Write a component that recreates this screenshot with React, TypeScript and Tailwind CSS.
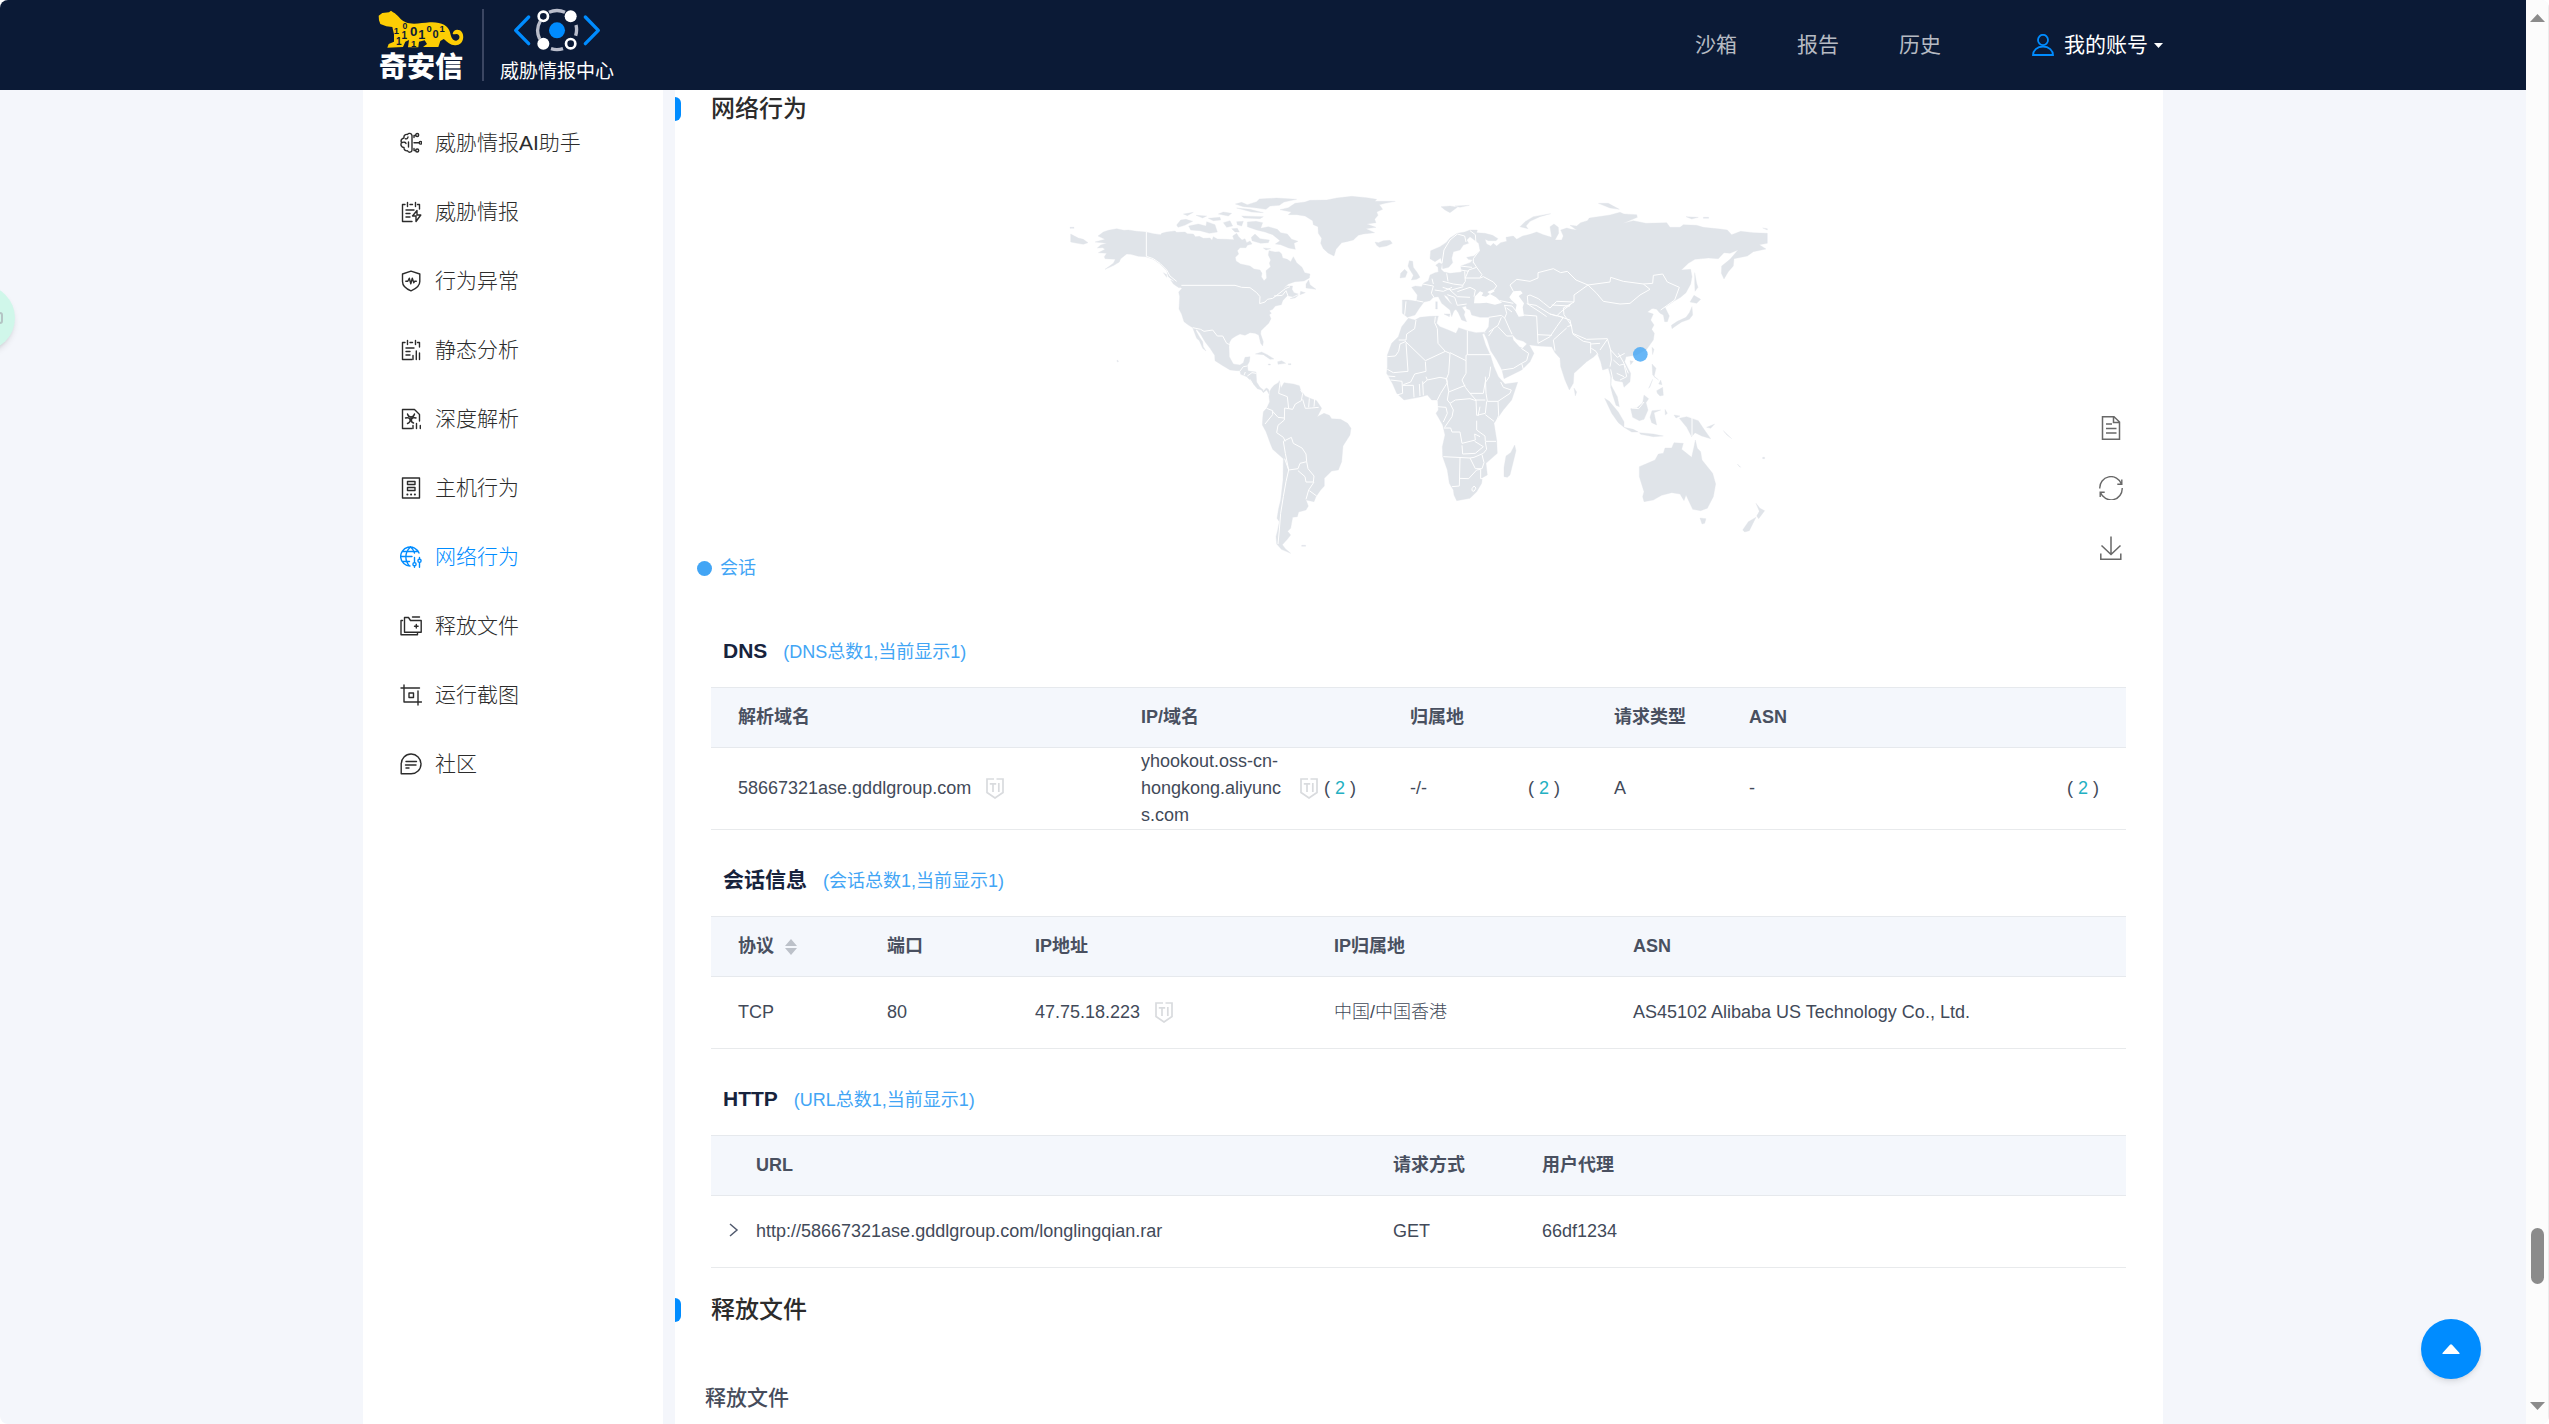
import React from "react";

type IconProps = { children: React.ReactNode };

function MenuIcon({ children }: IconProps) {
  return (
    <svg
      className="size-[22px] shrink-0"
      viewBox="0 0 22 22"
      fill="none"
      stroke="currentColor"
      strokeWidth="1.4"
      strokeLinecap="round"
      strokeLinejoin="round"
      aria-hidden="true"
    >
      {children}
    </svg>
  );
}

const notebook = (
  <>
    <path d="M5 3.500H2.500v17H12M10 3.500h2.500M17.500 3.500h2v4.500M7.500 1.500v4M15.500 1.500v4M6 9h8M6 12.500h4M6 16h4" />
  </>
);

const menu: { label: string; active?: boolean; icon: React.ReactNode }[] = [
  {
    label: "威胁情报AI助手",
    icon: (
      <>
        <path d="M12 3.500C11.500 1 8.500.800 7.500 2.500 5 2 3.500 4 4 6 1.500 6.500.500 8.500 1.500 10.500.200 13 1.500 15.500 4 15.500 3.800 18 5.500 19 7.500 18.800 8.500 21 12 20.500 12 18zM8 5c-.2 1.500-1.500 2-2.500 1.800M2 10.500c2-.8 3.500-.3 4 1M8.500 10v5" />
        <path d="M14 5.500V3.500h1.500M14 10.800h5M14 16.500v2h1.500" />
        <circle cx="17.200" cy="3" r="1.500" />
        <circle cx="20.500" cy="10.800" r="1.300" />
        <circle cx="17.200" cy="18.500" r="1.500" />
      </>
    ),
  },
  {
    label: "威胁情报",
    icon: (
      <>
        {notebook}
        <path d="M17 9.500 12.500 15H16v5.500L20.800 14H17z" />
      </>
    ),
  },
  {
    label: "行为异常",
    icon: (
      <>
        <path d="M11 1.200 19.800 4v7.500c0 4.500-4.200 7.500-8.800 9.300C6.400 19 2.500 16 2.500 11.500V4z" />
        <path d="M5.800 11.200h2l1.500-3 1.500 5.600 1.500-5.600 1.500 4.500 1-1.500h1.500" />
      </>
    ),
  },
  {
    label: "静态分析",
    icon: (
      <>
        {notebook}
        <path d="M13 16.500v4M16.300 12v8.500M19.500 14v6.500" />
      </>
    ),
  },
  {
    label: "深度解析",
    icon: (
      <>
        <path d="M12 20.500H2.500V1.500h12L19.500 6.500V13" />
        <path d="M13 17.500v3M16.500 15.500v5M20.300 17.500v3" />
        <path d="M7.500 6c.5 2 1.500 3 3.500 3s3-1 3.500-3M5.500 10c2-.8 4 0 4.500 1.500s-.5 3.500-2.500 4M16 10c-2-.8-4 0-4.500 1.500s.5 3 2 3.500M11 9v4" />
      </>
    ),
  },
  {
    label: "主机行为",
    icon: (
      <>
        <rect x="2.500" y="1" width="17" height="20" />
        <rect x="7.500" y="4.500" width="7.500" height="3" />
        <rect x="7.500" y="10.500" width="7.500" height="3" />
        <path d="M7.300 17.500h.2M11 17.500h.2M14.800 17.500h.2" strokeWidth="1.900" />
      </>
    ),
  },
  {
    label: "网络行为",
    active: true,
    icon: (
      <>
        <path d="M19 7A9.500 9.500 0 1 0 10 20M10.500 1C4.500 6.500 4.500 14.500 9.500 20M10.500 1c2 1.500 3.300 3.500 4 6M2.500 5.500h15.500M1 10.500h11M2.500 15.500h7" />
        <path d="M14.500 11.500v5M14.500 20v1.300M19.500 11.500V13M19.500 16.500v4.800" />
        <circle cx="14.500" cy="18.200" r="1.600" />
        <circle cx="19.500" cy="14.800" r="1.600" />
      </>
    ),
  },
  {
    label: "释放文件",
    icon: (
      <>
        <path d="M4.500 2.500h4l2 3h10.700v11.700H4.500zM12.500 2h7M2.500 5.500H1v14.300h16.500v-2" />
        <path d="M16.300 9.500v3.600M14.500 11.300h3.600" />
      </>
    ),
  },
  {
    label: "运行截图",
    icon: (
      <>
        <path d="M1 4h18.500M4 1v17M4 18h17.500M18 7v14" />
        <rect x="9" y="9" width="4.500" height="4.500" />
      </>
    ),
  },
  {
    label: "社区",
    icon: (
      <>
        <path d="M1.200 20.800V11A9.900 9.900 0 1 1 11 20.800zM6 8.500h10.500M5.500 12h10.500M6 15h3" />
      </>
    ),
  },
];

function TigerLogo() {
  return (
    <svg className="h-[38px] w-[86px]" viewBox="115 25 258 114" aria-hidden="true">
      <path
        fill="#fdcd04"
        d="M117 42 128 34 148 32 154 27 160 32C176 40 182 56 198 62 218 70 245 64 270 62 302 60 326 70 331 92 335 110 340 118 350 117 363 114 362 97 350 97 345 97 342 100 339 96 341 84 352 82 361 86 376 95 374 126 352 130 335 134 325 122 312 112L302 118 296 136H250L262 127 255 116 238 120 236 137H205L208 115 197 120 190 136 143 138 147 127 163 120 163 98 158 76 140 74 122 67 118 56z"
      />
      <g fill="#0b1a36" fontFamily="Liberation Sans" fontWeight="700" textAnchor="middle">
        <text x="170" y="98" fontSize="28">1</text>
        <text x="196" y="82" fontSize="26">0</text>
        <text x="194" y="112" fontSize="30">1</text>
        <text x="177" y="130" fontSize="30">1</text>
        <text x="222" y="103" fontSize="40">0</text>
        <text x="222" y="137" fontSize="28">1</text>
        <text x="246" y="111" fontSize="38">1</text>
        <text x="268" y="92" fontSize="28">0</text>
        <text x="288" y="109" fontSize="33">0</text>
        <text x="307" y="92" fontSize="28">1</text>
      </g>
    </svg>
  );
}

function CenterLogo() {
  return (
    <svg className="h-[45px] w-[88px]" viewBox="520 25 264 135" fill="none" aria-hidden="true">
      <g stroke="#008cff" strokeWidth="10" strokeLinecap="round" strokeLinejoin="round">
        <path d="M567 52 528 92 567 132M737 52 776 92 737 132" />
      </g>
      <path
        stroke="#b9bdcb"
        strokeWidth="10"
        d="M602 64A57 57 0 0 0 600 118M628 38A58 58 0 0 1 676 38M709 76A58 58 0 0 1 708 108M634 147A58 58 0 0 0 670 147"
      />
      <circle cx="652" cy="92" r="24" fill="#008cff" />
      <g stroke="#fff" strokeWidth="8">
        <circle cx="611" cy="50" r="14" fill="#0b1a36" />
        <circle cx="693" cy="132" r="14" fill="#0b1a36" />
      </g>
      <circle cx="693" cy="50" r="18" fill="#fff" />
      <circle cx="611" cy="132" r="18" fill="#fff" />
    </svg>
  );
}

function Header() {
  return (
    <header className="h-[90px] shrink-0 bg-[#0b1a36]">
      <div className="mx-auto flex h-full max-w-[1800px] items-center pl-[15px]">
        <a href="#home" className="flex flex-col items-center gap-1 pt-1" aria-label="奇安信">
          <TigerLogo />
          <span className="text-[28px] leading-8 font-black text-white">奇安信</span>
        </a>
        <span className="mr-4 ml-[18px] h-[72px] w-[2px] bg-[#3b4662]" />
        <a href="#ti" className="flex flex-col items-center gap-1 pt-1">
          <CenterLogo />
          <span className="text-[19px] leading-[30px] text-white">威胁情报中心</span>
        </a>
        <nav className="ml-auto flex items-center gap-[60px] text-[21px] text-[#b6bac3]">
          <a href="#sandbox">沙箱</a>
          <a href="#report">报告</a>
          <a href="#history">历史</a>
        </nav>
        <button type="button" className="ml-[91px] flex items-center text-[21px] text-white">
          <svg className="mr-[10px] size-[22px]" viewBox="0 0 22 22" fill="none" stroke="#008cff" strokeWidth="1.800" aria-hidden="true">
            <ellipse cx="11" cy="6" rx="5" ry="5.200" />
            <path d="M1 21c0-4.500 4-8.500 10-8.500S21 16.500 21 21z" />
          </svg>
          我的账号
          <svg className="ml-[6px] h-[5px] w-[9px]" viewBox="0 0 9 5" fill="#fff" aria-hidden="true">
            <path d="M0 0h9L4.500 5z" />
          </svg>
        </button>
      </div>
    </header>
  );
}

function Sidebar() {
  return (
    <aside className="w-[300px] shrink-0 bg-white pt-[18px]">
      <ul>
        {menu.map((m) => (
          <li key={m.label}>
            <a
              href={"#" + m.label}
              className={
                "flex h-[69px] items-center gap-[13px] pl-[37px] text-[21px] font-light " +
                (m.active ? "text-[#008cff]" : "text-[#2c2c2c]")
              }
            >
              <MenuIcon>{m.icon}</MenuIcon>
              {m.label}
            </a>
          </li>
        ))}
      </ul>
    </aside>
  );
}

const americas =
  "M148 165 160 156 175 151 200 146 222 151 235 150 260 154 287 156 310 161 332 164 335 160 350 156 375 153 380 157 405 156 412 161 430 162 436 170 448 169 460 175 480 174 486 181 490 170 502 177 530 178 552 179 548 168 560 160 566 170 576 180 585 176 590 188 600 183 606 192 592 196 588 203 570 203 562 212 566 222 556 232 558 243 572 252 600 258 612 267 630 270 636 280 634 290 642 302 650 294 648 272 662 260 658 250 662 240 655 225 657 212 675 216 688 215 695 222 698 234 712 238 722 245 730 230 740 248 756 262 764 278 780 282 778 294 762 303 735 305 715 312 700 325 712 318 728 318 726 328 732 338 745 342 728 350 712 347 698 362 694 374 676 378 668 388 658 392 664 400 658 404 663 416 656 430 645 440 633 452 632 462 640 485 638 498 632 490 626 465 615 460 600 458 585 466 570 462 558 468 545 476 538 488 537 500 538 530 550 552 570 555 580 548 585 532 600 530 598 545 592 556 594 572 602 574 618 576 620 606 630 622 640 630 650 624 658 630 657 642 650 630 640 638 634 630 622 626 610 612 600 600 590 590 572 583 570 572 560 572 540 570 515 555 495 542 494 526 480 505 465 485 450 460 440 448 438 452 448 470 458 485 460 500 468 513 458 505 448 482 440 475 435 462 428 443 415 435 402 425 395 403 387 387 389 350 386 336 396 325 380 318 370 302 355 290 350 272 330 252 310 238 287 230 265 229 243 223 230 222 212 236 208 246 192 256 165 268 190 250 196 238 165 236 163 230 170 220 145 218 165 208 158 203 142 204 152 195 170 190 135 186 165 178 144 168z" +
  "M685 608 672 616 665 624 660 632 657 650 659 665 650 685 640 695 638 715 637 735 648 755 660 788 668 808 700 836 699 900 692 960 686 985 681 1015 688 1025 683 1050 678 1070 680 1092 694 1108 722 1120 706 1106 697 1094 712 1078 722 1065 713 1054 722 1045 728 1012 742 1010 746 996 768 990 775 978 768 960 792 965 798 950 812 930 823 918 823 895 845 873 865 870 875 845 879 798 900 765 903 745 893 730 872 718 845 716 838 706 822 700 802 710 815 685 800 662 780 655 765 648 752 630 748 617 730 612 702 608 693 624 688 602z" +
  "M690 89 715 83 735 70 765 66 780 61 830 60 860 54 905 49 950 53 980 58 975 64 1036 64 1005 70 988 74 998 88 980 96 984 106 974 118 978 128 950 132 978 142 948 146 974 158 940 162 925 166 910 180 890 185 875 188 858 208 852 228 834 219 820 206 812 190 815 175 805 160 804 140 790 134 788 122 765 108 740 104 715 104 724 96z" +
  "M975 186 985 188 1000 182 1020 181 1027 190 1010 198 988 202 980 196z" +
  "M556 72 575 67 592 74 620 65 628 57 680 54 740 58 702 66 688 76 660 78 648 88 620 84 602 82 580 80zM560 84 600 88 640 98 605 96zM575 108 640 110 630 116 582 114zM520 96 545 100 535 108 505 102z" +
  "M592 126 618 124 638 128 632 145 655 140 682 148 692 158 712 162 725 178 744 184 732 190 736 208 716 204 692 194 676 192 690 182 668 164 645 156 620 150 592 140z" +
  "M416 138 445 132 468 138 470 125 495 134 502 156 478 160 450 152 422 150zM380 135 392 120 408 118 428 124 404 136 384 142zM520 128 540 122 548 138 530 142zM560 125 580 124 575 138 562 134zM545 146 562 145 568 156 555 156zM604 172 615 162 630 176 658 180 655 188 632 190 606 182zM438 106 470 108 458 114zM400 102 430 97 412 107zM475 115 510 112 512 120 490 122zM640 204 662 206 648 210z" +
  "M768 312 776 300 780 314 798 328 768 324zM720 356 745 346 735 354zM752 334 766 338 750 344z" +
  "M616 522 635 516 652 524 672 537 660 538 640 524zM683 545 695 542 707 550 684 553zM715 551h8v3h-8zM655 552h6v3h-6z" +
  "M62 162 85 174 100 178 114 188 100 193 82 190 62 186zM60 142h12v3h-12zM201 540 206 544 202 546zM340 278 350 284 350 292zM362 300 390 316 388 324 370 312zM755 1096h12v3h-12z";

const americasBorders =
  "M289 156V229L310 236 330 250 350 270 360 288 380 304M394 316H555L575 322 600 323 620 338 630 350 629 371 645 366 652 358 668 355 684 343 706 326 720 320M672 348 697 346 708 332 714 348M428 443 452 448 462 454 488 450 502 468 518 468 530 490 540 494M570 573 580 560 592 558M586 576 582 586M592 588 606 578 618 580M608 612 600 598M640 632 644 626M658 632V624M690 608 686 640 712 650 716 686 704 684 703 720 684 736 680 758 700 772 706 784M650 685 668 692 668 704 645 732M668 694 684 712 702 714M716 686 728 688 736 672 754 662 758 640 752 630M758 658 766 685 785 684 806 682M778 655 776 682M794 656 792 680M700 784 724 772 730 790 756 804 768 822 770 845 750 850 744 866 716 870 706 820zM704 836 716 870 708 905 700 950 692 1000 688 1050 684 1092M770 845 774 866 792 888 790 906 768 906 765 890 744 872M792 906 776 930 768 958M778 932 800 948";

const oldWorld =
  "M97 360 115 360 140 364 142 345 125 322 136 318 155 320 160 310 175 302 180 285 195 278 205 276 204 262 197 256 207 248 216 252 213 268 222 276 240 280 275 276 272 258 300 248 308 240 295 238 290 232 312 228 330 212 326 190 300 170 290 180 296 190 280 195 270 210 250 215 245 235 248 248 236 262 218 266 216 248 212 234 195 245 180 236 182 212 210 200 228 188 240 174 262 160 284 156 300 150 322 150 320 158 345 160 368 166 384 176 378 182 355 182 345 178 350 192 362 198 370 190 380 198 392 188 410 184 408 172 430 168 440 178 458 168 480 163 500 156 520 164 545 172 540 140 552 132 565 142 566 160 555 180 575 180 580 168 572 150 590 144 605 148 620 150 600 136 620 138 632 128 652 122 658 114 720 105 750 97 762 102 800 104 802 112 760 130 790 122 828 130 890 128 900 142 930 142 940 134 980 136 1000 142 1050 147 1072 150 1085 164 1112 154 1150 158 1192 160 1192 190 1168 194 1188 207 1150 215 1132 228 1092 236 1090 258 1075 275 1062 297 1054 280 1055 258 1080 238 1104 210 1080 220 1062 218 1045 236 1015 234 975 238 955 250 934 270 962 268 966 290 962 312 948 338 932 352 914 362 885 382 898 408 892 425 884 425 880 405 870 400 860 388 845 385 857 378 832 396 850 402 842 420 852 435 845 448 853 460 850 480 830 508 800 525 768 530 764 545 782 580 780 605 762 622 758 606 735 602 724 590 723 615 742 650 748 680 738 676 728 645 722 622 722 590 715 565 698 570 692 545 682 520 672 530 650 545 612 580 610 610 598 630 585 600 572 560 570 535 555 518 545 500 505 498 474 494 460 484 440 478 425 462 430 480 448 500 458 505 474 488 492 520 480 545 455 570 402 596 396 570 380 540 362 512 352 480 342 460 356 440 358 412 330 412 305 405 300 390 290 386 288 378 276 382 285 395 282 405 290 425 275 420 265 398 255 384 240 364 232 350 222 344 225 352 240 368 262 385 252 392 245 410 240 390 215 370 205 350 190 352 180 362 162 366 148 385 135 405 112 412 97 400z" +
  "M135 420 115 415 95 440 85 470 65 490 52 525 52 560 50 580 68 612 80 640 102 660 130 655 155 650 172 645 185 660 203 660 205 690 198 700 218 735 225 765 217 800 218 830 232 870 238 910 250 930 252 945 260 962 300 955 320 935 335 910 337 893 352 885 348 850 382 820 380 780 372 730 400 690 425 660 443 607 405 612 385 590 372 560 362 528 347 495 337 463 350 456 318 458 292 452 266 443 258 460 235 450 210 440 200 430 205 408 180 409 150 412z" +
  "M118 242 128 244 130 262 142 278 150 292 140 298 124 300 130 286 120 270 114 258zM92 280 104 268 112 276 106 292 90 294z" +
  "M213 80 240 78 262 82 240 98 225 90zM255 78 298 76 270 82zM450 140 465 125 490 110 542 101 510 110 480 124 468 138 474 146zM685 70 715 70 748 88 720 84zM948 110 985 112 965 117zM1000 112h16v3h-16zM1178 144 1192 146v4z" +
  "M974 278 980 310 984 322 975 334 974 310zM960 366 972 346 992 358 980 370zM966 380 968 405 958 418 935 426 914 440 906 446 904 436 922 424 948 412 958 398z" +
  "M704 655 718 664 745 696 762 725 762 742 745 728 725 700zM762 742 790 748 805 756 785 756zM808 758 850 762 880 768 850 770 812 763zM782 686 800 684 818 668 822 645 836 656 828 668 834 690 822 718 808 722 788 712zM846 692 872 690 852 698 860 735 845 728 840 712zM885 688 892 700 886 705zM912 705 930 708 918 714zM928 715 950 710 985 722 1000 745 1022 776 995 768 975 758 965 770 950 742zM1010 742 1034 732 1022 745zM846 552 858 565 852 590 866 600 848 585zM860 632 878 622 880 646 870 648 862 640zM872 600 876 614 866 612zM836 625 848 598 840 620zM846 502 852 508 848 524zM780 542 790 544 782 554zM612 624 620 636 616 648zM402 890 402 862 408 828 422 818 434 795 438 812 420 885 412 892z" +
  "M808 860 832 850 855 840 865 822 880 820 885 804 905 804 912 788 940 790 935 808 965 832 972 800 976 780 982 805 992 815 996 840 1028 880 1037 912 1030 950 1012 985 992 992 968 988 948 945 942 962 930 942 905 938 875 946 850 960 822 965 818 950 822 935 808 890zM990 1014 1008 1016 1004 1030 996 1032zM1158 970 1170 985 1184 992 1166 1016 1160 1008 1168 994zM1118 1050 1135 1025 1158 1012 1138 1052 1124 1056zM1102 852 1112 862 1108 860zM1178 832h6v4h-6zM1060 752 1085 776 1070 764zM197 365h5v22h-5zM222 402 240 402 238 410z";

const seas =
  "M312 370 314 350 330 334 340 338 335 347 348 350 360 342 378 352 396 368 375 374 350 368 330 370zM352 336 370 328 374 334 360 342zM418 352 430 334 452 332 458 340 446 348 462 370 458 382 462 408 446 410 436 392 440 374 424 360z";

const oldBorders =
  "M108 364 104 404M140 362 160 366M158 312 190 318 184 340 192 352M186 296 190 312M230 280 234 304M194 330 220 334 246 322M218 304 250 312 280 316M218 322 244 330 280 320M284 274 286 304 278 316M240 330 262 350 300 352M262 335 276 330 300 322 316 330 312 350M232 344 254 352 262 376 290 372M284 294 330 294M286 294 296 270 320 262 310 246M270 258 306 262M272 270 296 274M330 294 340 290 370 306 380 318 368 335M320 262 336 284 330 292M216 250 222 210 240 180 262 162 284 168 288 186M300 152 316 164 318 190 328 212 310 236 310 250" +
  "M430 334 420 315 440 298 480 304 504 294 504 278 550 266 572 278 592 274 618 300 654 315 612 345 612 366 560 364 540 384 520 368 505 356 480 345 472 348 474 372M654 315 720 306 722 292 760 304 820 312 840 328 810 345 780 370 750 372 700 364 680 340 654 315M820 312 848 310 850 286 878 282 892 306 928 322 914 360 872 390M612 366 580 384 582 404 604 436 608 460 650 478 712 476 722 510 742 532 764 520M474 372 498 376 540 402 560 408 572 396 604 372M462 405 500 408 504 490 540 470 560 440 580 412 540 402M504 464 545 466M470 370 510 396 530 410M555 512 550 480 590 444M592 440 604 436M608 462 640 484 662 488 662 520M662 492 690 490M664 505 678 514 684 524M712 478 690 510M722 510 724 540 720 560M730 540 748 556 762 552 770 590 750 600M745 520 762 550 775 580M740 580 762 590M728 596 722 568" +
  "M356 412 394 406 404 414 420 450 426 462M404 376 410 400 404 414M402 376 426 378 440 395M390 362 430 370M410 384 426 396M394 412 384 436 356 456M384 440 410 468 426 468M370 448 356 468M396 570 430 565 455 550 470 542 476 520 454 505M455 550 460 568M565 408 600 420 604 440M545 375 600 378M786 684 806 686 822 666M966 714V768" +
  "M86 480 108 480 110 462 134 446 138 420M108 484 90 492 86 514 76 528 52 530M108 488 114 574 70 578 52 568M108 486 166 542 226 514 204 490 202 446 194 428 196 410M166 545 168 574 134 582 122 606 100 614M226 514 240 520 236 580 228 600M240 518 288 542 288 526 292 524 292 452M292 524H362M288 542 288 580 276 600 286 622 300 640 318 660 346 660M62 600 96 604 98 640 80 645M52 588 76 590M98 616 130 616 132 652M148 612 150 648M158 604 160 646M168 590 172 600 210 592 230 596 232 608 212 640 202 660M230 600 236 634 232 660 240 670 256 660 300 656 318 662M236 636 286 616M172 600 158 612M202 680 228 682 232 700 220 726M240 670 250 690 246 710 224 742M222 744 242 744 246 756 270 756 276 790 316 780 314 762 330 770M346 590 348 640 352 664 384 664 420 640 424 630 400 622 392 606M384 664 386 706 378 728M346 604 340 640 300 640M362 560 358 590 346 608M350 664 346 700 320 706 318 660M320 722 320 750 345 768 346 784 378 784M346 704 372 724M324 708 330 680M314 784 340 800 316 820 278 822 276 796M220 830 300 834 312 832 340 820 350 808 346 786M270 834 268 918 246 920M268 895 296 896 320 870 332 868 332 896 340 896M300 834 316 866 336 866 342 848 336 824M306 926 312 918 318 924 312 934 306 932z";

function WorldMap() {
  return (
    <svg className="h-auto w-full self-start" viewBox="0 0 2220 1170" role="img" aria-label="会话分布地图">
      <g fill="#e0e4e9" stroke="#e0e4e9" strokeWidth="1" strokeLinejoin="round">
        <path d={americas} />
        <path d={oldWorld} transform="translate(960 0)" />
      </g>
      <path d={seas} fill="#fff" transform="translate(960 0)" />
      <g fill="none" stroke="#fff" strokeWidth="3" strokeLinejoin="round">
        <path d={americasBorders} />
        <path d={oldBorders} transform="translate(960 0)" />
      </g>
      <circle cx="1771" cy="523" r="22" fill="#42a5f5" fillOpacity="0.800" />
    </svg>
  );
}

function TiBadge() {
  return (
    <svg className="h-[21px] w-[18px] shrink-0" viewBox="0 0 18 21" fill="none" stroke="#d9dbde" strokeWidth="1.700" aria-label="TI">
      <path d="M8 1H1v13.500L9 20l8-5.500V1h-6.500" />
      <path d="M3.800 5.800h6.400M7 5.800V14M12.800 5v9" />
    </svg>
  );
}

function Count({ n }: { n: number }) {
  return (
    <button type="button" className="shrink-0 whitespace-pre">
      ( <span className="text-[#23b0c2]">{n}</span> )
    </button>
  );
}

function TableTitle({ title, note }: { title: string; note: string }) {
  return (
    <div className="flex h-[86px] items-center gap-4 pt-[14px] pl-3">
      <h3 className="text-[21px] leading-8 font-bold text-[#17233d]">{title}</h3>
      <span className="pt-0.5 text-[18px] leading-8 text-[#42a5f5]">{note}</span>
    </div>
  );
}

function SectionTitle({ children }: { children: string }) {
  return (
    <div className="flex h-[38px] items-center">
      <span className="h-6 w-[6px] rounded-r-md bg-[#008cff]" />
      <h2 className="ml-[30px] text-[24px] leading-8 font-medium text-[#2c2c2c]">{children}</h2>
    </div>
  );
}

const table = "w-full table-fixed border-t border-[#e6e9ed] text-left text-[18px] leading-[27px] text-[#424a59]";
const headRow = "h-[60px] border-b border-[#e6e9ed] bg-[#f4f7fc] text-[#495060]";
const bodyRow = "h-[72px] border-b border-[#e8eaec]";
const cell = "pl-[27px]";

function DnsTable() {
  return (
    <table className={table}>
      <colgroup>
        <col className="w-[403px]" />
        <col className="w-[269px]" />
        <col className="w-[204px]" />
        <col className="w-[135px]" />
        <col />
      </colgroup>
      <thead>
        <tr className={headRow}>
          {["解析域名", "IP/域名", "归属地", "请求类型", "ASN"].map((h) => (
            <th key={h} scope="col" className={cell}>{h}</th>
          ))}
        </tr>
      </thead>
      <tbody>
        <tr className="border-b border-[#e8eaec]">
          <td className={cell}>
            <div className="flex items-center gap-[15px]">
              58667321ase.gddlgroup.com
              <TiBadge />
            </div>
          </td>
          <td className="px-[27px]">
            <div className="flex items-center">
              <span className="w-[144px] break-words">yhookout.oss-cn-hongkong.aliyuncs.com</span>
              <span className="ml-auto flex items-center gap-[6px]">
                <TiBadge />
                <Count n={2} />
              </span>
            </div>
          </td>
          <td className="px-[27px]">
            <div className="flex items-center justify-between">-/-<Count n={2} /></div>
          </td>
          <td className={cell}>A</td>
          <td className="px-[27px]">
            <div className="flex items-center justify-between">-<Count n={2} /></div>
          </td>
        </tr>
      </tbody>
    </table>
  );
}

function SessionTable() {
  return (
    <table className={table}>
      <colgroup>
        <col className="w-[149px]" />
        <col className="w-[148px]" />
        <col className="w-[299px]" />
        <col className="w-[299px]" />
        <col />
      </colgroup>
      <thead>
        <tr className={headRow}>
          <th scope="col" className={cell}>
            <button type="button" className="flex items-center gap-[11px]">
              协议
              <svg className="h-4 w-3" viewBox="0 0 12 16" fill="#bcc1c9" aria-hidden="true">
                <path d="M6 0 12 7H0zM6 16 0 9h12z" />
              </svg>
            </button>
          </th>
          {["端口", "IP地址", "IP归属地", "ASN"].map((h) => (
            <th key={h} scope="col" className={cell}>{h}</th>
          ))}
        </tr>
      </thead>
      <tbody>
        <tr className={bodyRow}>
          <td className={cell}>TCP</td>
          <td className={cell}>80</td>
          <td className={cell}>
            <div className="flex items-center gap-[15px]">
              47.75.18.223
              <TiBadge />
            </div>
          </td>
          <td className="pl-[27px] font-light">中国/中国香港</td>
          <td className={cell}>AS45102 Alibaba US Technology Co., Ltd.</td>
        </tr>
      </tbody>
    </table>
  );
}

function HttpTable() {
  return (
    <table className={table}>
      <colgroup>
        <col className="w-[45px]" />
        <col className="w-[610px]" />
        <col className="w-[149px]" />
        <col />
      </colgroup>
      <thead>
        <tr className={headRow}>
          <td />
          <th scope="col">URL</th>
          <th scope="col" className={cell}>请求方式</th>
          <th scope="col" className={cell}>用户代理</th>
        </tr>
      </thead>
      <tbody>
        <tr className={bodyRow}>
          <td className="pb-1 pl-4">
            <button type="button" aria-label="展开" className="flex items-center">
              <svg className="h-[14px] w-3" viewBox="0 0 12 14" fill="none" stroke="#515a6e" strokeWidth="1.500" aria-hidden="true">
                <path d="M3 1 10 7 3 13" />
              </svg>
            </button>
          </td>
          <td>http://58667321ase.gddlgroup.com/longlingqian.rar</td>
          <td className={cell}>GET</td>
          <td className={cell}>66df1234</td>
        </tr>
      </tbody>
    </table>
  );
}

function MapTools() {
  const tool = "flex size-6 items-center justify-center";
  const draw = "size-6";
  return (
    <div className="flex flex-col gap-9 self-end justify-self-end pr-10 pb-5 text-[#686868]">
      <button type="button" aria-label="数据视图" className={tool}>
        <svg className={draw} viewBox="0 0 24 24" fill="none" stroke="currentColor" strokeWidth="1.500">
          <path d="M3.500.800H15L20.500 6v17.200h-17zM14.500.800V6.500h6M7 8h6M7 12.500h10.500M7 17h10.500" />
        </svg>
      </button>
      <button type="button" aria-label="还原" className={tool}>
        <svg className={draw} viewBox="0 0 24 24" fill="none" stroke="currentColor" strokeWidth="1.400">
          <path d="M.800 12.500A11.200 11.200 0 0 1 22.500 8M23.200 12A11.200 11.200 0 0 1 1.500 16.500M22.800 3.500V8.300h-4.500M1.200 21v-4.800h4.500" />
        </svg>
      </button>
      <button type="button" aria-label="保存为图片" className={tool}>
        <svg className={draw} viewBox="0 0 24 24" fill="none" stroke="currentColor" strokeWidth="1.500">
          <path d="M12 .500V18M2.500 9.500 12 18.500 21.500 9.500M1.800 17.500v5.700h20v-5.700" />
        </svg>
      </button>
    </div>
  );
}

function Scrollbar() {
  return (
    <div className="flex w-[23px] shrink-0 flex-col items-center border-r border-[#ececec] bg-[#fcfcfc] pt-[14px] pb-[14px]" aria-hidden="true">
      <svg className="h-2 w-[15px]" viewBox="0 0 15 8" fill="#8b8b8b"><path d="M7.500 0 15 8H0z" /></svg>
      <div className="flex-1" />
      <div className="h-14 w-[13px] rounded-full bg-[#8b8b8b]" />
      <div className="h-[118px]" />
      <svg className="h-2 w-[15px]" viewBox="0 0 15 8" fill="#8b8b8b"><path d="M0 0h15L7.500 8z" /></svg>
    </div>
  );
}

export default function App() {
  return (
    <div className="flex h-screen overflow-hidden rounded-lg bg-[#f4f6fb] font-['Liberation_Sans','Noto_Sans_CJK_SC',sans-serif]">
      <div className="flex min-w-0 flex-1 flex-col">
        <Header />
        <div className="mx-auto flex min-h-0 w-full max-w-[1800px] flex-1 gap-3">
          <Sidebar />
          <main className="min-w-0 flex-1 overflow-hidden bg-white">
            <SectionTitle>网络行为</SectionTitle>
            <div className="grid h-[473px] grid-cols-[1fr_740px_1fr] pt-[52px] pb-[21px] pl-[2px]">
              <button type="button" className="flex items-center gap-2 self-end justify-self-start pl-5 text-[18px] leading-6 text-[#42a5f5]">
                <span className="size-[15px] rounded-full bg-[#42a5f5]" />
                会话
              </button>
              <WorldMap />
              <MapTools />
            </div>
            <div className="pr-[37px] pl-9">
              <TableTitle title="DNS" note="(DNS总数1,当前显示1)" />
              <DnsTable />
              <TableTitle title="会话信息" note="(会话总数1,当前显示1)" />
              <SessionTable />
              <TableTitle title="HTTP" note="(URL总数1,当前显示1)" />
              <HttpTable />
            </div>
            <div className="pt-[23px]">
              <SectionTitle>释放文件</SectionTitle>
            </div>
            <h3 className="mt-[53px] pl-[30px] text-[21px] leading-8 font-medium text-[#464c5b]">释放文件</h3>
          </main>
        </div>
      </div>
      <Scrollbar />
      <button
        type="button"
        aria-label="返回顶部"
        className="fixed right-[68px] bottom-[45px] flex size-[60px] items-center justify-center rounded-full bg-[#008cff] shadow-md"
      >
        <svg className="h-[10px] w-[18px]" viewBox="0 0 18 10" fill="#fff" aria-hidden="true">
          <path d="M8 .800Q9-.300 10 .800L17.500 9Q18 10 17 10H1Q0 10 .500 9z" />
        </svg>
      </button>
      <button
        type="button"
        aria-label="助手"
        className="fixed top-[285px] -left-[51px] flex size-[66px] items-center justify-end rounded-full bg-[#d0f7ea] pr-3 shadow-md"
      >
        <span className="h-3 w-[6px] rounded-full border-2 border-[#b4c4c4]" />
      </button>
    </div>
  );
}
